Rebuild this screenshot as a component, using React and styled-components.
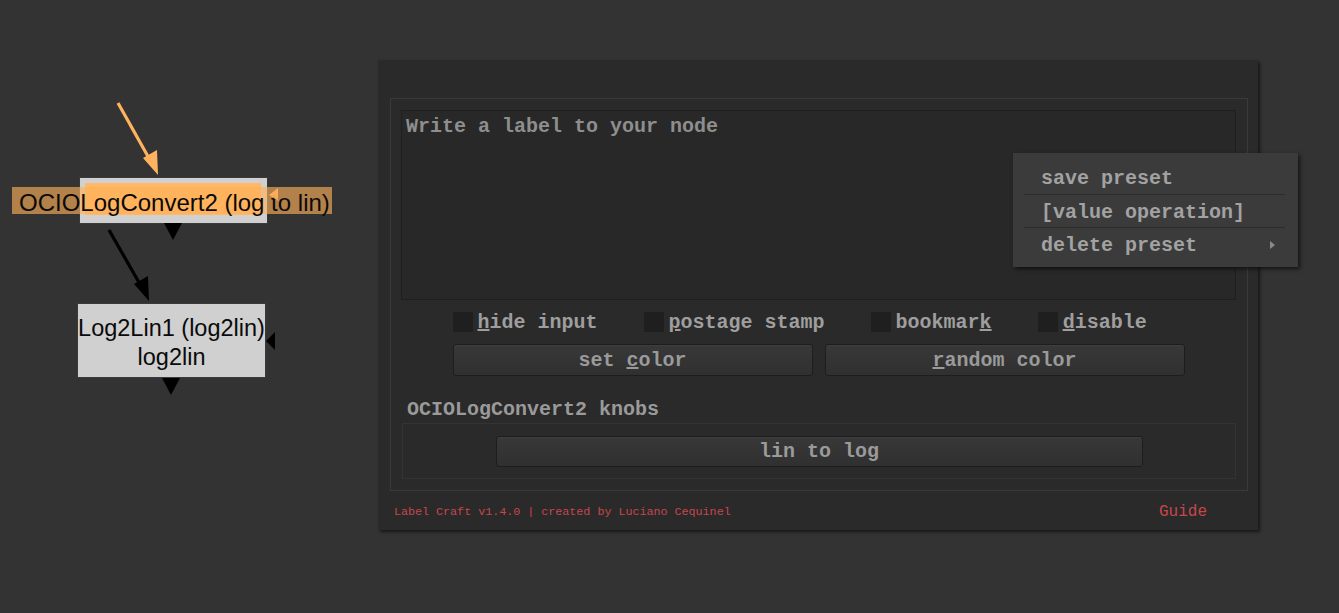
import React from 'react'
import styled, { createGlobalStyle } from 'styled-components'

const GlobalStyle = createGlobalStyle`
  html, body {
    margin: 0;
    padding: 0;
    background: #333333;
  }
  body {
    width: 1339px;
    height: 613px;
    overflow: hidden;
    font-family: 'Liberation Mono', 'Courier New', monospace;
  }
`

const MONO = `'Liberation Mono', 'Courier New', monospace`
const SANS = `'Liberation Sans', Arial, sans-serif`

// ---------- node graph (free canvas) ----------

const Page = styled.div`
  display: flex;
  align-items: flex-start;
  padding-top: 60px;
`

const Graph = styled.div`
  position: relative;
  width: 378px;
  height: 553px;
  margin-top: -60px;
  flex-shrink: 0;
`

const Node = styled.div`
  position: absolute;
  left: ${(p) => p.x}px;
  top: ${(p) => p.y}px;
  width: ${(p) => p.w}px;
  height: ${(p) => p.h}px;
  box-sizing: border-box;
  background: #d0d0d0;
  border: 1px solid #3a3a3a;
  display: flex;
  flex-direction: column;
  align-items: center;
  justify-content: center;
  font-family: ${SANS};
  font-size: 23.5px;
  line-height: 29px;
  color: #0a0a0a;
  padding-top: 4px;
  white-space: nowrap;
`

const Highlight = styled.div`
  position: absolute;
  inset: 5px 6px 8px 5px;
  background: #ffb966;
`

const LabelBand = styled.div`
  position: absolute;
  left: 12px;
  top: 187px;
  width: 320px;
  height: 27px;
  box-sizing: border-box;
  padding-left: 7px;
  background: rgba(255, 176, 89, 0.63);
  font-family: ${SANS};
  font-size: 24px;
  line-height: 32px;
  color: #0a0a0a;
  white-space: nowrap;
  overflow: visible;
`

const Wires = styled.svg`
  position: absolute;
  left: 0;
  top: 0;
  pointer-events: none;
`

function NodeGraph() {
  return (
    <Graph>
      <Node x={79} y={177} w={189} h={47}>
        <Highlight />
      </Node>
      <LabelBand>OCIOLogConvert2 (log to lin)</LabelBand>
      <Node x={77} y={303} w={189} h={75}>
        <span>Log2Lin1 (log2lin)</span>
        <span>log2lin</span>
      </Node>
      <Wires width="378" height="553" viewBox="0 0 378 553">
        {/* selected input wire */}
        <line x1="118" y1="103" x2="150" y2="160" stroke="#ffb35e" strokeWidth="3.2" />
        <polygon points="158,175 143,158 157,150" fill="#ffb35e" />
        <polygon points="269,195 278,188 278,201" fill="#ffb35e" opacity="0.9" />
        {/* node 1 output */}
        <polygon points="164,223 182,223 173,240" fill="#000" />
        <line x1="109" y1="230" x2="141" y2="286" stroke="#000" strokeWidth="3.2" />
        <polygon points="149,301 134,284 148,276" fill="#000" />
        {/* node 2 */}
        <polygon points="266,341 275,332 275,350" fill="#000" />
        <polygon points="162,378 180,378 171,395" fill="#000" />
      </Wires>
    </Graph>
  )
}

// ---------- Label Craft panel ----------

const Panel = styled.div`
  position: relative;
  width: 880px;
  height: 470px;
  box-sizing: border-box;
  background: #2a2a2a;
  box-shadow: 2px 2px 3px rgba(0, 0, 0, 0.55);
  padding: 38px 10px 0 12px;
  display: flex;
  flex-direction: column;
`

const Frame = styled.div`
  height: 393px;
  box-sizing: border-box;
  border: 1px solid #3a3a3a;
  padding: 11px 11px 0 10px;
  display: flex;
  flex-direction: column;
`

const TextBox = styled.div`
  height: 190px;
  box-sizing: border-box;
  background: #282828;
  border: 1px solid #1f1f1f;
  padding: 6px 4px;
  font-family: ${MONO};
  font-weight: bold;
  font-size: 20px;
  line-height: 20px;
  color: #8e8e8e;
`

const Controls = styled.div`
  width: 732px;
  align-self: center;
  display: flex;
  flex-direction: column;
  gap: 12px;
  margin-top: 12px;
`

const CheckRow = styled.div`
  display: flex;
  gap: 46px;
  height: 20px;
  align-items: center;
`

const Check = styled.label`
  display: flex;
  align-items: center;
  gap: 5px;
  font-family: ${MONO};
  font-weight: bold;
  font-size: 20px;
  color: #9e9e9e;
  white-space: nowrap;
`

const Box = styled.span`
  width: 20px;
  height: 20px;
  background: #1f1f1f;
`

const ButtonRow = styled.div`
  display: flex;
  gap: 12px;
`

const Button = styled.div`
  width: ${(p) => p.w}px;
  height: ${(p) => p.h}px;
  box-sizing: border-box;
  border: 1px solid #1d1d1d;
  border-radius: 3px;
  background: linear-gradient(#383838, #303030);
  box-shadow: inset 0 1px 0 #3e3e3e;
  display: flex;
  align-items: center;
  justify-content: center;
  font-family: ${MONO};
  font-weight: bold;
  font-size: 20px;
  color: #9a9a9a;
  white-space: pre;
`

const SectionTitle = styled.div`
  margin-top: 22px;
  padding-left: 6px;
  height: 24px;
  line-height: 24px;
  font-family: ${MONO};
  font-weight: bold;
  font-size: 20px;
  color: #9a9a9a;
`

const KnobFrame = styled.div`
  margin: 1px 0 0 1px;
  height: 56px;
  box-sizing: border-box;
  border: 1px solid #333333;
  display: flex;
  align-items: center;
  justify-content: center;
`

const Footer = styled.div`
  flex: 1;
  display: flex;
  align-items: center;
  justify-content: space-between;
  margin: 0 -10px 0 -12px;
  padding: 2px 51px 0 16px;
  font-family: ${MONO};
  color: #c8464b;
`

const Credit = styled.span`
  font-size: 11.7px;
`

const Guide = styled.span`
  font-size: 16px;
`

const Menu = styled.div`
  position: absolute;
  left: 635px;
  top: 93px;
  width: 285px;
  box-sizing: border-box;
  padding: 8px 13px 7px 11px;
  background: #3b3b3b;
  box-shadow: 2px 2px 4px rgba(0, 0, 0, 0.6);
  font-family: ${MONO};
  font-weight: bold;
  font-size: 20px;
  color: #a2a2a2;
`

const MenuItem = styled.div`
  height: 33px;
  box-sizing: border-box;
  display: flex;
  align-items: center;
  justify-content: space-between;
  padding: 2px 10px 0 17px;
  border-top: ${(p) => (p.sep ? '1px solid #2c2c2c' : 'none')};
`

const SubArrow = styled.span`
  width: 0;
  height: 0;
  border-top: 4px solid transparent;
  border-bottom: 4px solid transparent;
  border-left: 5px solid #8a8a8a;
`

export default function App() {
  return (
    <>
      <GlobalStyle />
      <Page>
        <NodeGraph />
        <Panel>
          <Frame>
            <TextBox>Write a label to your node</TextBox>
            <Controls>
              <CheckRow>
                <Check>
                  <Box />
                  <span><u>h</u>ide input</span>
                </Check>
                <Check>
                  <Box />
                  <span><u>p</u>ostage stamp</span>
                </Check>
                <Check>
                  <Box />
                  <span>bookmar<u>k</u></span>
                </Check>
                <Check>
                  <Box />
                  <span><u>d</u>isable</span>
                </Check>
              </CheckRow>
              <ButtonRow>
                <Button w={360} h={32}>
                  <span>set <u>c</u>olor</span>
                </Button>
                <Button w={360} h={32}>
                  <span><u>r</u>andom color</span>
                </Button>
              </ButtonRow>
            </Controls>
            <SectionTitle>OCIOLogConvert2 knobs</SectionTitle>
            <KnobFrame>
              <Button w={647} h={31}>lin to log</Button>
            </KnobFrame>
          </Frame>
          <Footer>
            <Credit>Label Craft v1.4.0 | created by Luciano Cequinel</Credit>
            <Guide>Guide</Guide>
          </Footer>
          <Menu>
            <MenuItem>save preset</MenuItem>
            <MenuItem sep>[value operation]</MenuItem>
            <MenuItem sep>
              <span>delete preset</span>
              <SubArrow />
            </MenuItem>
          </Menu>
        </Panel>
      </Page>
    </>
  )
}
